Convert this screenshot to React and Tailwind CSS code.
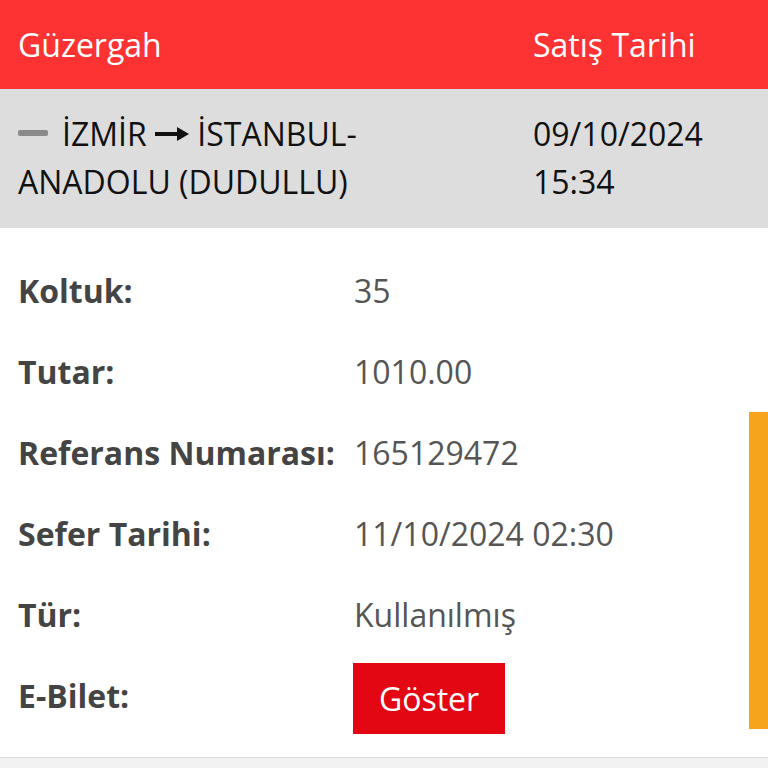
import React from "react";

const rows = [
  ["Koltuk:", "35"],
  ["Tutar:", "1010.00"],
  ["Referans Numarası:", "165129472"],
  ["Sefer Tarihi:", "11/10/2024 02:30"],
  ["Tür:", "Kullanılmış"],
];

export default function App() {
  return (
    <div className="relative w-[768px] h-[768px] overflow-hidden bg-white font-['Open_Sans',sans-serif] text-[32px]">
      <div className="flex h-[89px] items-center bg-[#fd3333] text-white">
        <div className="w-[533px] pl-[18px]">Güzergah</div>
        <div>Satış Tarihi</div>
      </div>
      <div className="flex h-[139px] bg-[#dddddd] pt-[21px] leading-[48px] text-[#111]">
        <div className="w-[533px] pl-[18px] pr-[10px]">
          <span className="inline-block w-[30px] h-[6px] rounded-[2px] bg-[#8a8a8a] align-middle mr-[14px] relative top-[-4px]"></span>
          İZMİR{" "}
          <svg className="inline-block align-middle relative top-[-3px]" width="34" height="14" viewBox="0 0 34 14">
            <rect x="0" y="5" width="24" height="4" fill="#111" />
            <path d="M22 0 L34 7 L22 14 Z" fill="#111" />
          </svg>{" "}
          İSTANBUL-
          <br />
          ANADOLU (DUDULLU)
        </div>
        <div>
          09/10/2024
          <br />
          15:34
        </div>
      </div>
      <div className="pt-[22px]">
        {rows.map(([k, v]) => (
          <div key={k} className="flex h-[81px] items-center">
            <div className="w-[354px] pl-[18px] font-bold text-[#444]">{k}</div>
            <div className="text-[#555]">{v}</div>
          </div>
        ))}
        <div className="flex h-[81px] items-center">
          <div className="w-[353px] pl-[18px] font-bold text-[#444]">E-Bilet:</div>
          <div className="mt-[6px] flex h-[71px] w-[152px] items-center justify-center bg-[#e30613] text-white">Göster</div>
        </div>
      </div>
      <div className="absolute left-0 right-0 top-[757px] h-[11px] border-t border-[#dcdcdc] bg-[#f2f2f2]"></div>
      <div className="absolute right-0 top-[412px] h-[317px] w-[19px] bg-[#f5a41b]"></div>
    </div>
  );
}
